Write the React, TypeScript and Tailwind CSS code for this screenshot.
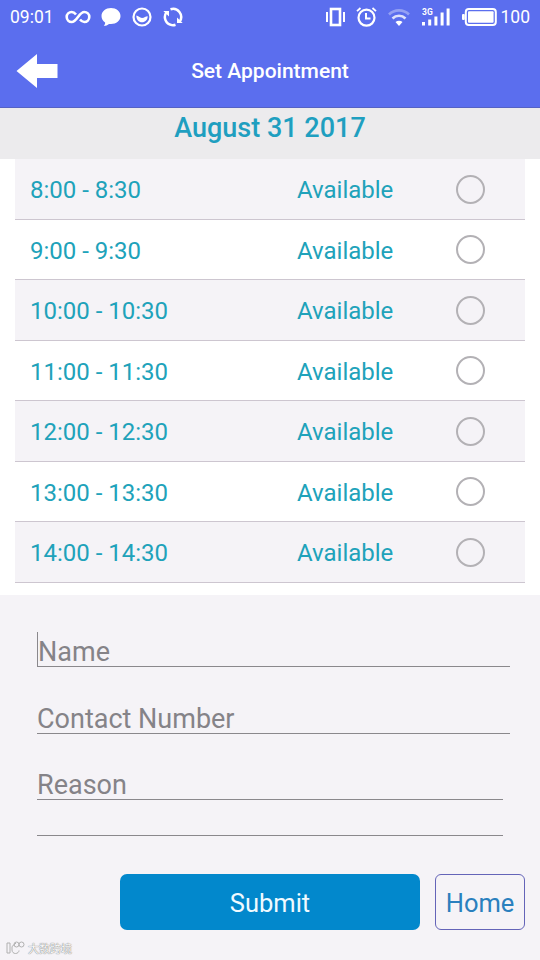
import { useState } from "react";

const slots = [
    { time: "8:00 - 8:30", status: "Available" },
    { time: "9:00 - 9:30", status: "Available" },
    { time: "10:00 - 10:30", status: "Available" },
    { time: "11:00 - 11:30", status: "Available" },
    { time: "12:00 - 12:30", status: "Available" },
    { time: "13:00 - 13:30", status: "Available" },
    { time: "14:00 - 14:30", status: "Available" },
];

const StatusBar = () => (
    <div className="flex h-[34px] items-center pl-[10px] pr-[10px] text-white">
        <span className="w-[55px] text-[17.5px] leading-[34px]">09:01</span>
        {/* Infinity */}
        <svg width="26" height="14" viewBox="0 0 26 14" fill="none" stroke="currentColor" strokeWidth="2.6">
            <path d="M11 4.500C9.800 3 8.700 2 6.700 2a5 5 0 0 0 0 10c2.500 0 3.800-1.600 6.300-5s3.800-5 6.300-5a5 5 0 0 1 0 10c-2 0-3.100-1-4.300-2.500" />
        </svg>
        {/* Chat bubble */}
        <svg className="ml-[10px]" width="20" height="20" viewBox="0 0 20 20" fill="currentColor">
            <path d="M10 1C4.700 1 .5 4.500.5 9c0 2.700 1.400 5 3.600 6.500.2 1.200-.4 2.300-1.300 3.300 2 0 3.800-.6 5.200-1.900.6.100 1.300.1 2 .1 5.300 0 9.500-3.500 9.500-8S15.300 1 10 1z" />
        </svg>
        {/* Smile */}
        <svg className="ml-[11px]" width="20" height="20" viewBox="0 0 20 20">
            <circle cx="10" cy="10" r="8.500" fill="none" stroke="currentColor" strokeWidth="2.200" />
            <path d="M4.300 8.500c2.200 0 3.200 2.500 5.700 2.500s3.500-1.700 5.700-1.700c0 3.500-2.500 6-5.700 6s-5.700-2.800-5.700-6.800z" fill="currentColor" />
        </svg>
        {/* Sync */}
        <svg className="ml-[11px]" width="20" height="20" viewBox="0 0 20 20" fill="none" stroke="currentColor" strokeWidth="2.500">
            <path d="M8.500 18A8.100 8.100 0 0 1 3.200 5.600M7.500 2.300a8.100 8.100 0 0 1 9.300 12.100M12.500 17.700A8.100 8.100 0 0 1 8 17.900" />
            <path d="M.3 4h5.700v5.500zM19.700 16h-5.700v-5.500z" fill="currentColor" stroke="none" />
        </svg>

        <div className="ml-auto flex items-center">
            {/* Vibrate */}
            <svg width="19" height="20" viewBox="0 0 19 20" fill="none" stroke="currentColor">
                <rect x="5" y="2" width="9" height="16" strokeWidth="2.600" />
                <path d="M1 5v10M18 5v10" strokeWidth="2" />
            </svg>
            {/* Alarm */}
            <svg className="ml-[11px]" width="21" height="20" viewBox="0 0 21 20" fill="none" stroke="currentColor">
                <circle cx="10.500" cy="10.700" r="8" strokeWidth="2.200" />
                <path d="M10 6v5.500h4.500" strokeWidth="2" />
                <path d="M1 4.200 4.500 1M20 4.200 16.500 1" strokeWidth="1.800" />
            </svg>
            {/* Wifi */}
            <svg className="ml-[11px]" width="22" height="20" viewBox="0 0 22 20" fill="none" stroke="currentColor" strokeWidth="2.600">
                <path d="M1 7.500c5.500-5.500 14.500-5.500 20 0" opacity=".35" />
                <path d="M4.500 11.500c3.700-3.600 9.300-3.600 13 0" opacity=".8" />
                <path d="M7.500 15c2-1.800 5-1.800 7 0L11 19z" fill="currentColor" stroke="none" />
            </svg>
            {/* Signal */}
            <svg className="ml-[12px]" width="28" height="20" viewBox="0 0 28 20" fill="currentColor">
                <text x="0" y="7.500" fontSize="8.500" fontWeight="700">3G</text>
                <path d="M0 15h3v3.500H0zM6.200 12.500h3v6h-3zM12.400 9.500h3v9h-3zM18.600 5.500h3v13h-3zM24.600 1.500h3v17h-3z" />
            </svg>
            {/* Battery */}
            <svg className="ml-[12px]" width="35" height="18" viewBox="0 0 35 18">
                <rect x="3.800" y="1" width="30" height="16" rx="3" fill="none" stroke="currentColor" strokeWidth="2" />
                <rect x="6" y="3.200" width="25.600" height="11.600" rx="1" fill="currentColor" />
                <rect x="0" y="6" width="2.800" height="6" rx="1" fill="currentColor" />
            </svg>
            <span className="ml-[3px] text-[17.5px] leading-[34px]">100</span>
        </div>
    </div>
);

const Watermark = () => (
    <div className="absolute bottom-[5px] left-[6px] flex items-center text-[#f8f8f8] [text-shadow:0_0_1px_#777,0_0_1px_#999]">
        <svg width="20" height="14" viewBox="0 0 20 14" fill="none" stroke="#b0b0b0" strokeWidth="1">
            <path d="M1 2h3v10H1zM10 2 6 5.500V9c0 2 1.500 3.500 3.500 3.500S13 11 13 9.500" />
            <circle cx="10.500" cy="3.500" r="2.500" />
            <circle cx="15.500" cy="3.500" r="2.500" />
        </svg>
        <span className="ml-[2px] font-['Noto_Sans_CJK_SC',sans-serif] text-[11px] leading-[10px]">大数跨境</span>
    </div>
);

const App = () => {
    const [selected, setSelected] = useState<number | null>(null);

    return (
        <div className="relative flex h-[960px] w-[540px] flex-col overflow-hidden bg-[#f5f3f7] font-[Roboto,sans-serif]">
            <header className="h-[108px] border-b border-[#5562c4] bg-[#5b6eee]">
                <StatusBar />
                <div className="grid h-[73px] grid-cols-[1fr_auto_1fr] items-center">
                    <button className="ml-[16px] w-[42px]">
                        <svg width="42" height="34" viewBox="0 0 42 34" fill="#fff">
                            <path d="M.5 17 21 0v10h20.500v14H21v10z" />
                        </svg>
                    </button>
                    <h1 className="pt-[1px] text-[21px] font-medium leading-[24px] text-white">
                        Set Appointment
                    </h1>
                </div>
            </header>

            <div className="h-[51px] bg-[#ecebed] pt-[4px] text-center text-[27px] font-medium leading-[32px] text-[#1f9fc0]">
                August 31 2017
            </div>

            {/* Time slots */}
            <div className="h-[436px] bg-white px-[15px]">
                {slots.map((slot, index) => (
                    <div
                        key={slot.time}
                        className="flex h-[60.5px] items-center border-b border-[#cdc6d0] pl-[15px] pr-[40px] text-[24px] text-[#20a2ba] odd:bg-[#f5f3f7]"
                        onClick={() => setSelected(index)}
                    >
                        <span className="w-[267px] pt-[3px]">{slot.time}</span>
                        <span className="pt-[3px]">{slot.status}</span>
                        <span className="ml-auto mt-px flex size-[29px] items-center justify-center rounded-full border-2 border-[#b3b1b5]">
                            {selected === index && <span className="size-[14px] rounded-full bg-[#5b6eee]" />}
                        </span>
                    </div>
                ))}
            </div>

            {/* Contact form */}
            <div className="flex flex-col pl-[37px] text-[27px] leading-[27px] text-[#858388]">
                <div className="mt-[37px] flex h-[35px] w-[473px] items-end border-b border-l border-b-[#8a888c] border-l-[#8a888c]">
                    Name
                </div>
                <div className="mt-[31px] flex h-[36px] w-[473px] items-end border-b border-[#8a888c]">
                    Contact Number
                </div>
                <div className="mt-[31px] flex h-[35px] w-[466px] items-end border-b border-[#8a888c]">
                    Reason
                </div>
                <div className="h-[36px] w-[466px] border-b border-[#8a888c]" />
            </div>

            <div className="mt-[38px] flex gap-[15px] pl-[120px] text-[25.5px]">
                <button className="h-[56px] w-[300px] rounded-[7px] bg-[#0288cc] pt-[3px] text-[#f0faff]">Submit</button>
                <button className="h-[56px] w-[90px] rounded-[6px] border border-[#6464b8] pt-[2px] text-[#2a80be]">Home</button>
            </div>

            <Watermark />
        </div>
    );
};

export default App;
